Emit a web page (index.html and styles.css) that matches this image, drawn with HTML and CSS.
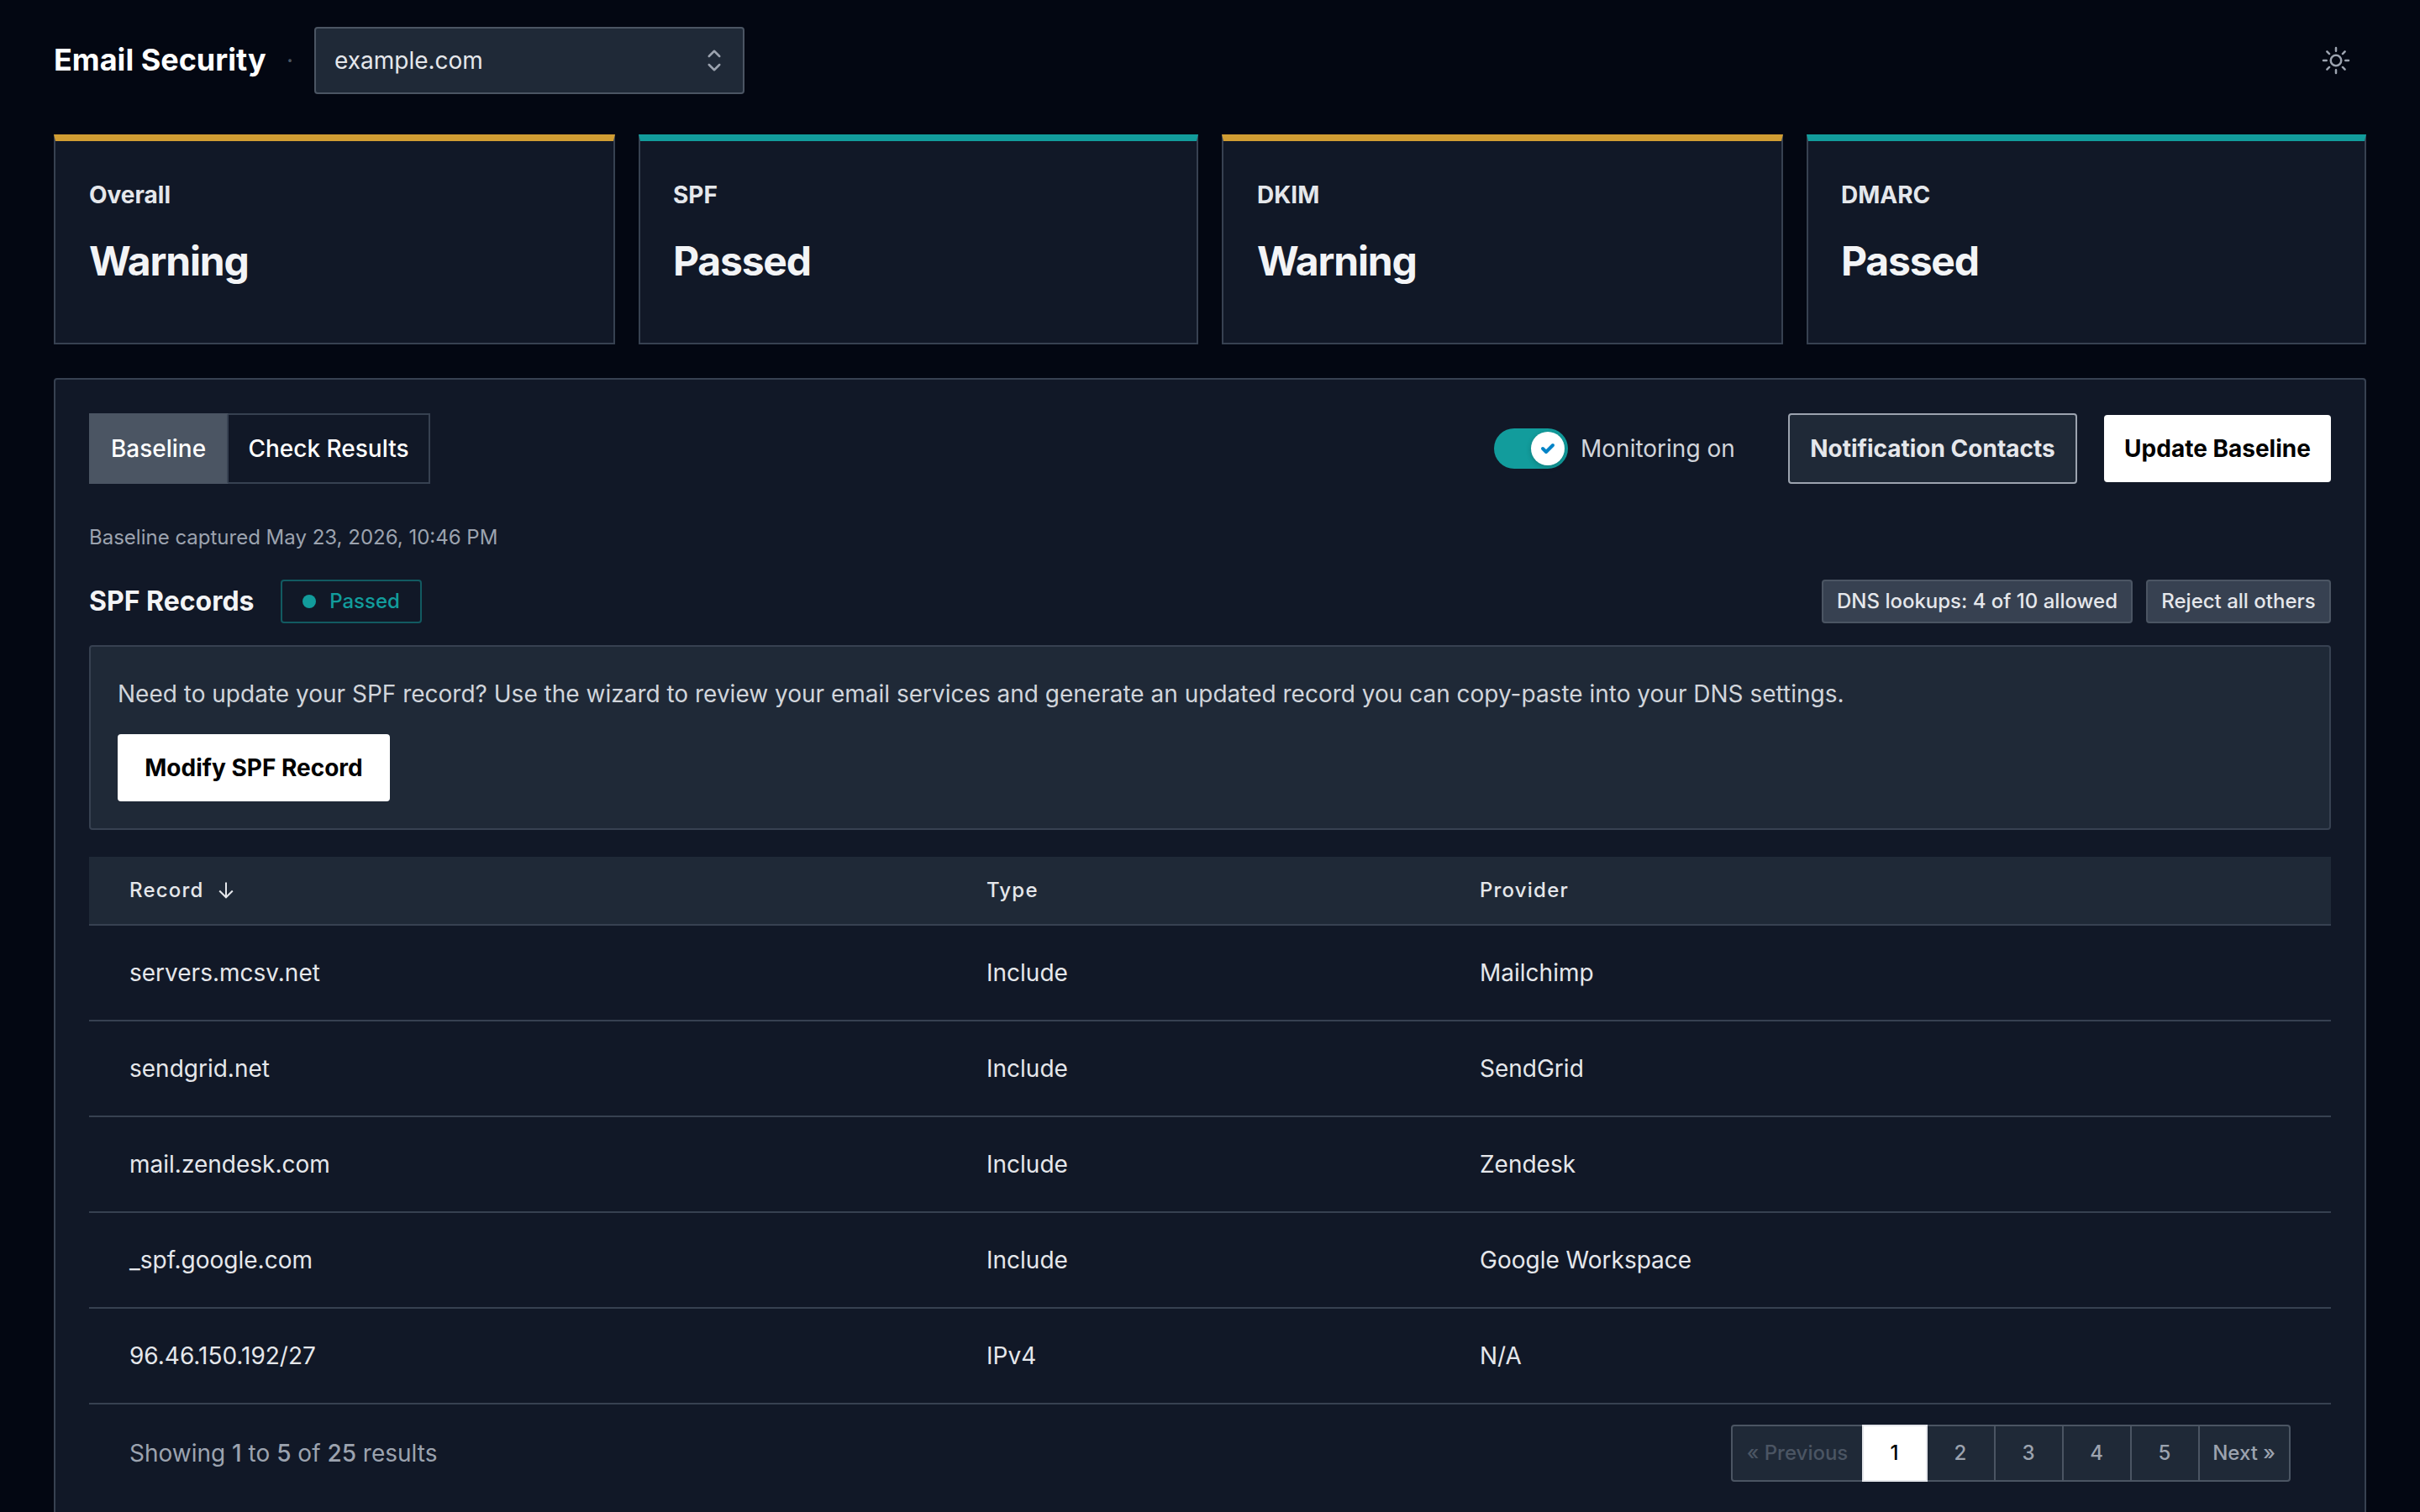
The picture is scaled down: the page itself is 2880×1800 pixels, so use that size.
FILE: index.html
```html
<!DOCTYPE html>
<html lang="en">
<head>
    <meta charset="UTF-8">
    <meta name="viewport" content="width=device-width, initial-scale=1.0">
    <title>Email Security</title>
    <link rel="stylesheet" href="styles.css">
</head>
<body>
    <header class="page-header">
        <h1>Email Security</h1>
        <span class="separator">·</span>
        <div class="domain-select">
            <span>example.com</span>
            <svg class="select-icon" viewBox="0 0 24 24" fill="none" stroke="currentColor" stroke-width="1.5" stroke-linecap="round" stroke-linejoin="round">
                <path d="M8.25 15 12 18.75 15.75 15m-7.5-6L12 5.25 15.75 9"/>
            </svg>
        </div>
        <button class="theme-btn" aria-label="Theme">
            <svg viewBox="0 0 24 24" fill="none" stroke="currentColor" stroke-width="1.5" stroke-linecap="round" stroke-linejoin="round">
                <path d="M12 3v2.25m6.364.386-1.591 1.591M21 12h-2.25m-.386 6.364-1.591-1.591M12 18.75V21m-4.773-4.227-1.591 1.591M5.25 12H3m4.227-4.773L5.636 5.636M15.75 12a3.75 3.75 0 1 1-7.5 0 3.75 3.75 0 0 1 7.5 0Z"/>
            </svg>
        </button>
    </header>

    <main>
        <section class="stats">
            <div class="stat warning">
                <div class="stat-label">Overall</div>
                <div class="stat-value">Warning</div>
            </div>
            <div class="stat passed">
                <div class="stat-label">SPF</div>
                <div class="stat-value">Passed</div>
            </div>
            <div class="stat warning">
                <div class="stat-label">DKIM</div>
                <div class="stat-value">Warning</div>
            </div>
            <div class="stat passed">
                <div class="stat-label">DMARC</div>
                <div class="stat-value">Passed</div>
            </div>
        </section>

        <section class="panel">
            <div class="toolbar">
                <div class="tabs">
                    <button class="tab active">Baseline</button>
                    <button class="tab">Check Results</button>
                </div>
                <div class="actions">
                    <div class="monitoring">
                        <span class="toggle">
                            <span class="knob">
                                <svg viewBox="0 0 12 12" fill="currentColor">
                                    <path d="M3.707 5.293a1 1 0 00-1.414 1.414l1.414-1.414zM5 8l-.707.707a1 1 0 001.414 0L5 8zm4.707-3.293a1 1 0 00-1.414-1.414l1.414 1.414zm-7.414 2l2 2 1.414-1.414-2-2-1.414 1.414zm3.414 2l4-4-1.414-1.414-4 4 1.414 1.414z"/>
                                </svg>
                            </span>
                        </span>
                        <span>Monitoring on</span>
                    </div>
                    <button class="btn btn-secondary">Notification Contacts</button>
                    <button class="btn btn-primary update-btn">Update Baseline</button>
                </div>
            </div>

            <p class="captured">Baseline captured May 23, 2026, 10:46 PM</p>

            <div class="section-head">
                <h2>SPF Records</h2>
                <span class="badge badge-passed"><i class="dot"></i>Passed</span>
                <div class="badge-group">
                    <span class="badge dns-badge">DNS lookups: 4 of 10 allowed</span>
                    <span class="badge reject-badge">Reject all others</span>
                </div>
            </div>

            <div class="notice">
                <p>Need to update your SPF record? Use the wizard to review your email services and generate an updated record you can copy-paste into your DNS settings.</p>
                <button class="btn btn-primary modify-btn">Modify SPF Record</button>
            </div>

            <table class="records">
                <thead>
                    <tr>
                        <th class="col-record">
                            <span class="sort">Record
                                <svg viewBox="0 0 24 24" fill="none" stroke="currentColor" stroke-width="2.2">
                                    <path d="M12 1.5v19M3.5 12.5l8.5 8.5 8.5-8.5"/>
                                </svg>
                            </span>
                        </th>
                        <th class="col-type">Type</th>
                        <th>Provider</th>
                    </tr>
                </thead>
                <tbody>
                    <tr><td>servers.mcsv.net</td><td>Include</td><td>Mailchimp</td></tr>
                    <tr><td>sendgrid.net</td><td>Include</td><td>SendGrid</td></tr>
                    <tr><td>mail.zendesk.com</td><td>Include</td><td>Zendesk</td></tr>
                    <tr><td>_spf.google.com</td><td>Include</td><td>Google Workspace</td></tr>
                    <tr><td>96.46.150.192/27</td><td>IPv4</td><td>N/A</td></tr>
                </tbody>
            </table>

            <div class="table-footer">
                <p>Showing <b>1</b> to <b>5</b> of <b>25</b> results</p>
                <nav class="pagination">
                    <span class="page prev">« Previous</span>
                    <span class="page current">1</span>
                    <span class="page">2</span>
                    <span class="page">3</span>
                    <span class="page">4</span>
                    <span class="page">5</span>
                    <span class="page next">Next »</span>
                </nav>
            </div>
        </section>
    </main>
</body>
</html>
```
FILE: styles.css
```css
* {
    box-sizing: border-box;
}
html {
    font-size: 28px;
}
body {
    margin: 0;
    height: 1800px;
    overflow: hidden;
    padding: 32px 64px 0;
    background: #030712;
    color: #e5e7eb;
    font-family: Inter, sans-serif;
    font-size: 1rem;
    line-height: 40px;
}
h1, h2, p {
    margin: 0;
}
button {
    font: inherit;
    color: inherit;
    background: none;
    border: none;
    padding: 0;
}
.page-header {
    display: flex;
    align-items: center;
    height: 80px;
    margin-bottom: 48px;
}
h1 {
    width: 252px;
    padding-bottom: 2px;
    font-size: 36px;
    font-weight: 700;
    color: white;
    white-space: nowrap;
}
.separator {
    width: 58px;
    text-align: center;
    color: #4b5563;
}
.domain-select {
    display: flex;
    align-items: center;
    justify-content: space-between;
    width: 512px;
    height: 80px;
    padding: 0 14px 0 22px;
    background: #1f2937;
    border: 2px solid #4b5563;
    border-radius: 4px;
}
.select-icon {
    width: 40px;
    height: 40px;
    color: #9ca3af;
}
.theme-btn {
    margin-left: auto;
    margin-right: 16px;
    width: 40px;
    height: 40px;
    color: #9ca3af;
}
.theme-btn svg {
    display: block;
}
.stats {
    display: grid;
    grid-template-columns: repeat(2, 668px 666px);
    gap: 28px;
    margin-bottom: 40px;
}
.stat {
    height: 250px;
    padding: 44px 40px 0;
    background: #111827;
    border: 2px solid #374151;
    border-top-width: 8px;
}
.stat.warning {
    border-top-color: #d19d33;
}
.stat.passed {
    padding-left: 39px;
    border-top-color: #129c9c;
}
.stat-label {
    font-weight: 700;
}
.stat-value {
    margin-top: 31px;
    font-size: 48px;
    font-weight: 700;
    line-height: 56px;
    letter-spacing: -0.025em;
    color: #f3f4f6;
}
.panel {
    height: 1350px;
    padding: 40px 40px 0;
    background: #111827;
    border: 2px solid #374151;
    border-bottom: none;
    border-radius: 4px 4px 0 0;
}
.toolbar, .actions, .tabs, .monitoring {
    display: flex;
    align-items: center;
}
.toolbar {
    justify-content: space-between;
    height: 84px;
}
.tab {
    height: 84px;
    width: 240px;
    border: 2px solid #374151;
    border-left: none;
    font-weight: 500;
    color: white;
}
.tab.active {
    width: 166px;
    padding-left: 1px;
    background: #4b5563;
    border-color: #4b5563 #374151 #4b5563 #4b5563;
}
.monitoring {
    gap: 15px;
    width: 350px;
    color: #d1d5db;
}
.toggle {
    display: flex;
    justify-content: flex-end;
    width: 88px;
    height: 48px;
    padding: 4px;
    border-radius: 24px;
    background: #129c9c;
}
.knob {
    display: flex;
    align-items: center;
    justify-content: center;
    width: 40px;
    height: 40px;
    border-radius: 50%;
    background: white;
    color: #0284c7;
    box-shadow: 0 2px 6px rgba(0, 0, 0, 0.2);
}
.knob svg {
    width: 24px;
    height: 24px;
}
.btn {
    height: 80px;
    border-radius: 4px;
    font-weight: 700;
    white-space: nowrap;
}
.btn-primary {
    background: white;
    color: black;
}
.btn-secondary {
    width: 344px;
    height: 84px;
    margin-right: 32px;
    background: #1f2937;
    border: 2px solid #9ca3af;
}
.update-btn {
    width: 270px;
}
.captured {
    margin-top: 44px;
    font-size: 24px;
    color: #9ca3af;
}
.section-head {
    display: flex;
    align-items: center;
    height: 52px;
    margin-top: 30px;
}
h2 {
    width: 228px;
    font-size: 32px;
    font-weight: 700;
    color: #f3f4f6;
    white-space: nowrap;
}
.badge {
    display: inline-flex;
    align-items: center;
    justify-content: center;
    height: 52px;
    border: 2px solid #4b5563;
    border-radius: 4px;
    background: #374151;
    font-size: 24px;
    font-weight: 500;
    white-space: nowrap;
}
.badge-passed {
    width: 168px;
    gap: 16px;
    background: none;
    border-color: #125a61;
    color: #129c9c;
}
.dot {
    width: 16px;
    height: 16px;
    border-radius: 50%;
    background: #129c9c;
}
.badge-group {
    display: flex;
    gap: 16px;
    margin-left: auto;
}
.dns-badge {
    width: 370px;
}
.reject-badge {
    width: 220px;
}
.notice {
    height: 220px;
    margin-top: 26px;
    padding: 36px 32px;
    background: #1f2937;
    border: 2px solid #374151;
    border-radius: 4px;
    color: #d1d5db;
}
.modify-btn {
    width: 324px;
    margin-top: 28px;
}
.records {
    width: 100%;
    margin-top: 32px;
    border-collapse: separate;
    border-spacing: 0;
    table-layout: fixed;
}
th, td {
    padding: 0 48px;
    border-bottom: 2px solid #374151;
    text-align: left;
}
th {
    height: 82px;
    background: #1f2937;
    font-size: 24px;
    font-weight: 500;
    letter-spacing: 0.05em;
}
td {
    height: 114px;
}
.col-record {
    width: 1020px;
}
.col-type {
    width: 587px;
}
.sort {
    display: flex;
    align-items: center;
    gap: 15px;
}
.sort svg {
    width: 22px;
    height: 22px;
}
.table-footer {
    display: flex;
    align-items: center;
    justify-content: space-between;
    padding: 24px 48px;
    color: #9ca3af;
}
.table-footer b {
    font-weight: 500;
}
.pagination {
    display: flex;
    width: 666px;
    height: 68px;
    background: #1f2937;
    border: 2px solid #4b5563;
    border-radius: 4px;
    font-size: 24px;
    font-weight: 500;
}
.page {
    width: 81px;
    padding-right: 1px;
    display: flex;
    align-items: center;
    justify-content: center;
    border-right: 2px solid #4b5563;
    white-space: nowrap;
}
.prev {
    width: 154px;
    padding-right: 0;
    border-right: none;
    color: #4b5563;
}
.current {
    width: 78px;
    margin: -2px 0;
    background: white;
    border: 2px solid #e5e7eb;
    color: black;
}
.next {
    width: 106px;
    border-right: none;
}
```
